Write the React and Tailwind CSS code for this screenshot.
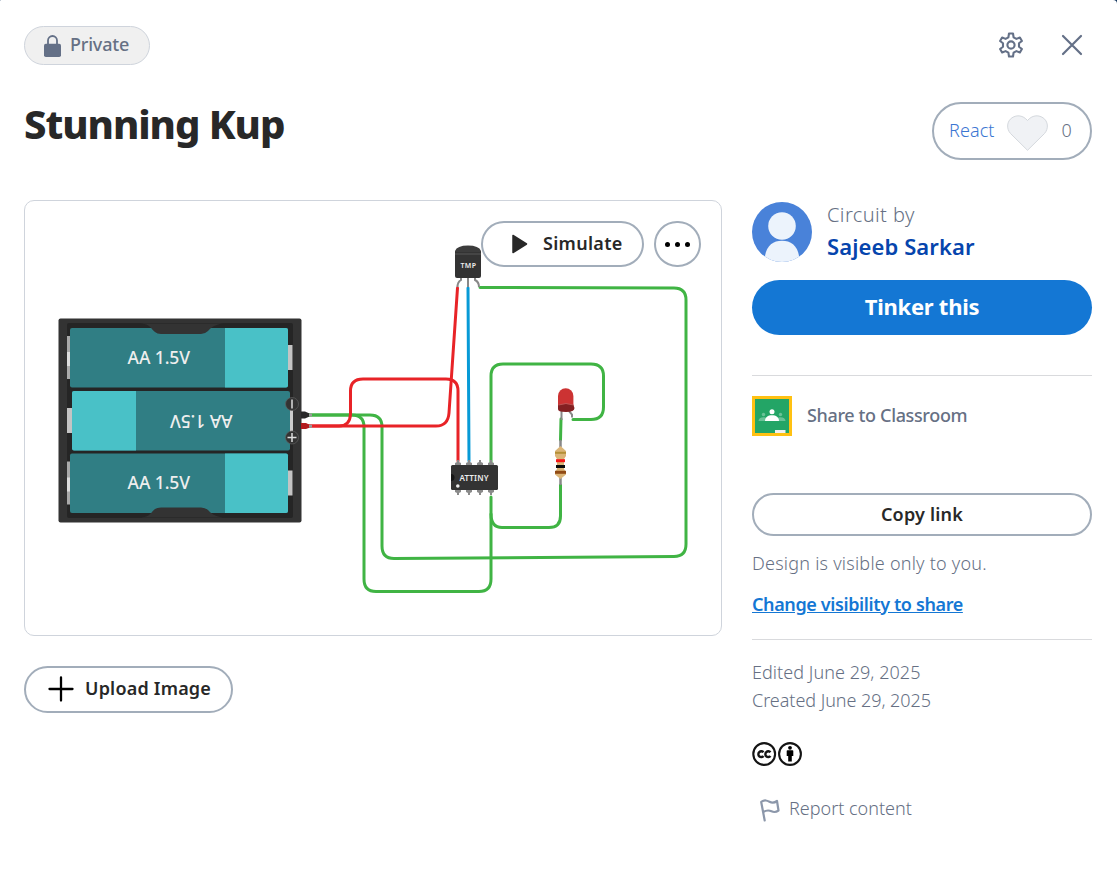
function Circuit() {
  const wire = { fill: "none", strokeWidth: 3, strokeLinecap: "round" };
  const battery = (y) => (
    <g>
      <path d={`M67 ${y + 8}h4v43h-4z`} fill="#aaa" />
      <path d={`M67 ${y + 24}h4v14h-4z`} fill="#ddd" />
      <path d={`M287 ${y + 17}h5.500v25h-5.500z`} fill="#c4c4c4" />
      <rect x="70" y={y} width="218" height="59.500" rx="2" fill="#307e84" />
      <path d={`M225 ${y}h61a2 2 0 0 1 2 2v55.500a2 2 0 0 1-2 2h-61z`} fill="#49c1c7" />
      <text x="127.500" y={y + 35.700} fontSize="17.500" fontWeight="500" textLength="62.500" fill="#eee">AA 1.5V</text>
    </g>
  );
  return (
    <svg className="block h-full w-full font-['Noto_Sans',sans-serif]" viewBox="25 201 696 434">
      <g stroke="#40b444" {...wire}>
        <path d="M306 415H352Q364 415 364 427V579Q364 591.500 376 591.500H479Q491 591.500 491 579V497" />
        <path d="M306 415H370Q382 415 382 427V546Q382 558.500 394 558.500L674 556.500Q686 556.500 686 544V300Q686 288 674 288L480 287.500" />
        <path d="M491 462V376Q491 364 503 364H591Q603.500 364 603.500 376V407Q603.500 419.500 591 419.500H573" />
        <path d="M561 419L560.500 440M560.500 485V516Q560.500 527.500 549 527.500H502Q491 527.500 491 514" />
      </g>
      <g stroke="#e82327" {...wire}>
        <path d="M306 426H339Q350 426 350.500 414V391Q350.500 379 363 379H446Q458 379 458 391V461" />
        <path d="M306 426H436Q448 426 449 413L457.500 288" />
      </g>
      <path d="M468 288L469 461" stroke="#079ad6" {...wire} />

      <rect x="58.500" y="318.500" width="243" height="204" rx="2" fill="#333" />
      <rect x="67" y="323" width="226" height="195" rx="2" fill="#252525" />
      {battery(328)}
      {battery(453.500)}
      <path d="M67 408h6v25h-6z" fill="#c4c4c4" />
      <path d="M289 404h4v28h-4z" fill="#ccc" />
      <rect x="72" y="391" width="218" height="59.500" rx="2" fill="#307e84" />
      <path d="M136 391H74a2 2 0 0 0-2 2v55.500a2 2 0 0 0 2 2h62z" fill="#49c1c7" />
      <text x="127.500" y="427" fontSize="17.500" fontWeight="500" textLength="62.500" fill="#eee" transform="rotate(180 180 421)">AA 1.5V</text>
      <path d="M141 323.500C150 324 151 329 155 332Q157 334 161 334H201Q205 334 208 331C212 327 214 325 223 323.500Z" fill="#333" />
      <path d="M141 517.500C150 517 151 512 155 509Q157 507.500 161 507.500H201Q205 507.500 208 510C212 514 214 516 223 517.500Z" fill="#333" />
      <g fill="#333" stroke="#606060" strokeWidth=".7">
        <circle cx="292" cy="404" r="6.500" />
        <circle cx="292" cy="437.500" r="6.500" />
      </g>
      <path d="M292 399.500v9M287.500 437.500h9M292 433v9" stroke="#ddd" strokeWidth="1.500" fill="none" />
      <path d="M301 411.500h4l4.500 2v3l-4.500 2h-4z" fill="#282828" />
      <path d="M301 423h5l4 2v2.500l-4 1.500h-5z" fill="#b31b1e" />
      <path d="M309 415h3M309 426.300h3" stroke="#999" strokeWidth="3" />

      <path d="M461 277v3q-3.500 2-3.500 7M468 277v10M475 277v3q4 2 4 7" stroke="#888" strokeWidth="2" fill="none" />
      <path d="M455 255V251Q457 245.500 468 245.500T481 251V255Z" fill="#3c3c3c" />
      <path d="M455 252h26v24a2 2 0 0 1-2 2h-22a2 2 0 0 1-2-2z" fill="#333" />
      <path d="M455 254h26" stroke="#626262" strokeWidth=".8" />
      <text x="460.500" y="267.700" fontSize="7" fontWeight="600" textLength="15.500" fill="#eee">TMP</text>

      <g fill="#8a8a8a">
        {[458, 469, 480, 491].map((x) => (
          <path key={x} d={`M${x - 3} 465v-2l2-1v-2h2v2l2 1v2zM${x - 3} 490v2l2 1v2h2v-2l2-1v-2z`} />
        ))}
      </g>
      <rect x="451" y="465" width="47" height="25" rx="1.500" fill="#333" />
      <path d="M451 474a3.500 3.500 0 0 1 0 7z" fill="#161616" />
      <circle cx="457.800" cy="486" r="1.800" fill="#eee" />
      <text x="459.500" y="480.500" fontSize="8" fontWeight="600" textLength="29" fill="#eee">ATTINY</text>

      <path d="M561.500 411v9M569 411l3 3.500v3" stroke="#888" strokeWidth="2" fill="none" />
      <path d="M558 396a7.700 7.700 0 0 1 15.400 0v10H558z" fill="#cc3333" />
      <path d="M558 405q7.700-2 15.400 0l1.100 3q0 4-8.500 4t-8-3z" fill="#842022" />
      <path d="M558.500 405q7.500-3 15 0" stroke="#bd5555" strokeWidth="1" fill="none" />
      <path d="M560.500 440v7M560.500 478v7" stroke="#888" strokeWidth="2.500" />
      <path d="M560.500 446l5.500 5v5l-2 3v10l2 3v2.500l-5.500 4.500-5.500-4.500V472l2-3v-10l-2-3v-5z" fill="#dbb577" />
      <path d="M555 452.800h11" stroke="#b49036" strokeWidth="2" />
      <path d="M556 460.700h9" stroke="#f51818" strokeWidth="3" />
      <path d="M556 466.500h9" stroke="#0a0a0a" strokeWidth="3" />
      <path d="M555 472.300h11" stroke="#914b15" strokeWidth="3" />
    </svg>
  );
}

function Lock() {
  return (
    <svg className="h-[22px] w-[17px] shrink-0" viewBox="0 0 17 22">
      <path d="M4 10V5.500a4.500 4.500 0 0 1 9 0V10" fill="none" stroke="#647087" strokeWidth="1.800" />
      <rect y="8.700" width="17" height="13.300" rx="1.800" fill="#647087" />
    </svg>
  );
}

function Gear() {
  return (
    <svg className="size-[26px]" viewBox="0 0 26 26" fill="none" stroke="#647087" strokeWidth="2.100" strokeLinejoin="round">
      <path d="M11 1.500h4l.6 3.800 2.800 1.600 3.500-1.400 2 3.500-2.900 2.300v3.400l2.900 2.300-2 3.500-3.500-1.400-2.800 1.600-.6 3.800h-4l-.6-3.800-2.800-1.600-3.500 1.400-2-3.500L5 14.700v-3.400L2.100 9l2-3.500 3.500 1.400 2.800-1.600z" />
      <circle cx="13" cy="13" r="3.600" />
    </svg>
  );
}

function Avatar() {
  return (
    <svg className="size-[60px] shrink-0" viewBox="0 0 60 60">
      <defs><clipPath id="avatar"><circle cx="30" cy="30" r="30" /></clipPath></defs>
      <g clipPath="url(#avatar)">
        <rect width="60" height="60" fill="#4982d9" />
        <circle cx="30" cy="24" r="13.800" fill="#ecf3fc" />
        <path d="M12.500 60C12.500 45 20 38.800 30 38.800S47.500 45 47.500 60z" fill="#ecf3fc" />
      </g>
    </svg>
  );
}

function Classroom() {
  return (
    <svg className="size-10 shrink-0" viewBox="0 0 40 40">
      <path d="M0 0h40v40H0z" fill="#ffc112" />
      <path d="M3 3h34v34H3z" fill="#23a566" />
      <g fill="#69c297">
        <circle cx="11.500" cy="18.500" r="1.700" />
        <circle cx="28.500" cy="18.500" r="1.700" />
        <path d="M6.500 25c0-2.500 2-3.800 5-3.800s4 .8 4 3.800zM24.500 25c0-3 1-3.800 4-3.800s5 1.300 5 3.800z" />
      </g>
      <circle cx="20" cy="15.700" r="2.500" fill="#fff" />
      <path d="M13 25c0-4 3-5.800 7-5.800s7 1.800 7 5.800z" fill="#fff" />
      <path d="M23 34h10.500v3H23z" fill="#f1f1f1" />
    </svg>
  );
}

function License() {
  return (
    <svg className="block h-6 w-[50px]" viewBox="0 0 50 24">
      <g fill="none" stroke="#141414">
        <circle cx="12.200" cy="12" r="10.900" strokeWidth="2.100" />
        <circle cx="38" cy="12" r="10.900" strokeWidth="2.100" />
        <path d="M11.500 10.300a2.900 2.900 0 1 0 0 3.700M18.500 10.300a2.900 2.900 0 1 0 0 3.700" strokeWidth="2.400" />
      </g>
      <circle cx="38" cy="5.800" r="1.900" fill="#000" />
      <path d="M35.500 8.300h5a.8.800 0 0 1 .8.800v5h-1.500v5.400h-3.600v-5.400h-1.500v-5a.8.800 0 0 1 .8-.8z" fill="#000" />
    </svg>
  );
}

export default function App() {
  return (
    <div className="bg-[#12365f]">
      <main className="flex h-[874px] w-full flex-col rounded-tl-[1px] rounded-tr-[4px] bg-white pl-6 pr-[25px] pt-[26px] font-['Noto_Sans','Open_Sans',sans-serif] text-[18px] text-[#667084]">
        <header className="flex h-[39px] items-center justify-between">
          <div className="flex h-[39px] w-[126px] items-center gap-[9px] rounded-full border border-[#cfd4dc] bg-[#f0f0f0] pl-[19px]">
            <Lock />
            <span className="pb-[3px] font-medium leading-6 tracking-[-0.2px]">Private</span>
          </div>
          <div className="flex items-center gap-[37px] pb-0.5 pr-[9px]">
            <button aria-label="Settings"><Gear /></button>
            <button aria-label="Close">
              <svg className="size-[22px]" viewBox="0 0 22 22" stroke="#647087" strokeWidth="2.200" strokeLinecap="round"><path d="M2 2l18 18M20 2L2 20" /></svg>
            </button>
          </div>
        </header>

        <div className="mt-[35px] flex h-[60px] justify-between">
          <h1 className="-mt-px text-[40px] font-extrabold leading-[50px] tracking-[-1.05px] text-[#282828]">Stunning Kup</h1>
          <button className="mt-0.5 flex h-[58px] w-40 items-center rounded-full border-2 border-[#a2adba] pl-[15px]">
            <span className="pb-0.5 font-light leading-6 tracking-[0.1px] text-[#3b76d2]">React</span>
            <svg className="ml-3 mt-1 h-9 w-[41px]" viewBox="0 0 41 36">
              <path d="M20.500 35.300L3.500 18.500C-1 13.500 0 6 5 2.800c5-3.300 11-2.500 15.500 2.700C25 .3 31 -.5 36 2.800c5 3.200 6 10.700 1.500 15.700z" fill="#f0f2f5" stroke="#d4d8dd" />
            </svg>
            <span className="ml-3.5 pb-0.5 font-light leading-6">0</span>
          </button>
        </div>

        <div className="mt-10 flex gap-[30px]">
          <section>
            <div className="relative h-[436px] w-[698px] rounded-[10px] border border-[#cfd4dc]">
              <Circuit />
              <div className="absolute right-5 top-5 flex gap-2.5">
                <button className="flex h-[46px] w-[163px] items-center rounded-full border-2 border-[#a2adba] bg-white pl-[29px] font-semibold text-[#282828]">
                  <svg className="h-5 w-4" viewBox="0 0 16 20"><path d="M1 1.500v17L14.500 10z" fill="#282828" stroke="#282828" strokeWidth="1.500" strokeLinejoin="round" /></svg>
                  <span className="ml-[15px] pb-0.5 leading-6 tracking-[0.3px]">Simulate</span>
                </button>
                <button aria-label="More" className="flex h-[46px] w-[47px] items-center justify-center gap-[5px] rounded-full border-2 border-[#a2adba] bg-white">
                  <span className="size-[5px] rounded-full bg-black" />
                  <span className="size-[5px] rounded-full bg-black" />
                  <span className="size-[5px] rounded-full bg-black" />
                </button>
              </div>
            </div>
            <button className="mt-[30px] flex h-[47px] w-[209px] items-center rounded-full border-2 border-[#a2adba] pb-px pl-[22px] font-semibold text-[#282828]">
              <svg className="size-[26px]" viewBox="0 0 26 26" stroke="#000" strokeWidth="2.300" strokeLinecap="round"><path d="M13 1.500v23M1.500 13h23" /></svg>
              <span className="ml-[11px] pb-0.5 leading-6 tracking-[0.2px]">Upload Image</span>
            </button>
          </section>

          <aside className="flex w-[340px] flex-col">
            <div className="mt-0.5 flex h-[60px] gap-[15px]">
              <Avatar />
              <div className="flex flex-col">
                <span className="text-[20px] font-light leading-[26px] tracking-[0.4px]">Circuit by</span>
                <span className="mt-[5px] text-[22px] font-semibold leading-[26px] tracking-[0.1px] text-[#0645ad]">Sajeeb Sarkar</span>
              </div>
            </div>
            <button className="mt-[18px] h-[55px] rounded-full bg-[#1477d4] pb-0.5 text-[22px] font-bold leading-[51px] tracking-[-0.25px] text-white">Tinker this</button>
            <hr className="mt-10 border-[#d9dadd]" />
            <div className="mt-5 flex h-10 items-center gap-[15px]">
              <Classroom />
              <span className="pb-0.5 font-medium leading-6 tracking-[-0.36px]">Share to Classroom</span>
            </div>
            <button className="mt-[57px] h-[43px] rounded-full border-2 border-[#a2adba] pb-0.5 font-semibold leading-6 tracking-[0.2px] text-[#282828]">Copy link</button>
            <p className="mt-[15px] font-light leading-6 tracking-[0.23px]">Design is visible only to you.</p>
            <a className="mt-[17px] font-semibold leading-6 tracking-[-0.38px] text-[#1477d4] underline">Change visibility to share</a>
            <hr className="mt-[23px] border-[#d9dadd]" />
            <p className="mt-[18px] font-light leading-7 tracking-[0.05px]">Edited June 29, 2025</p>
            <p className="font-light leading-7 tracking-[-0.05px]">Created June 29, 2025</p>
            <div className="mt-7"><License /></div>
            <div className="mt-[29px] flex items-center gap-[9px] pl-2">
              <svg className="mt-1 h-[23px] w-5 shrink-0" viewBox="0 0 20 23" fill="none" stroke="#8c97aa" strokeWidth="2.200" strokeLinejoin="round" strokeLinecap="round">
                <path d="M4.700 21.500L1.200 3C5 .5 7 1.500 9.500 2.800S15 3.500 17 2l1.500 9.500c-2 1.500-4.500 2-7 .8S6.500 11 3.200 13" />
              </svg>
              <span className="pb-0.5 font-light leading-6">Report content</span>
            </div>
          </aside>
        </div>
      </main>
    </div>
  );
}
